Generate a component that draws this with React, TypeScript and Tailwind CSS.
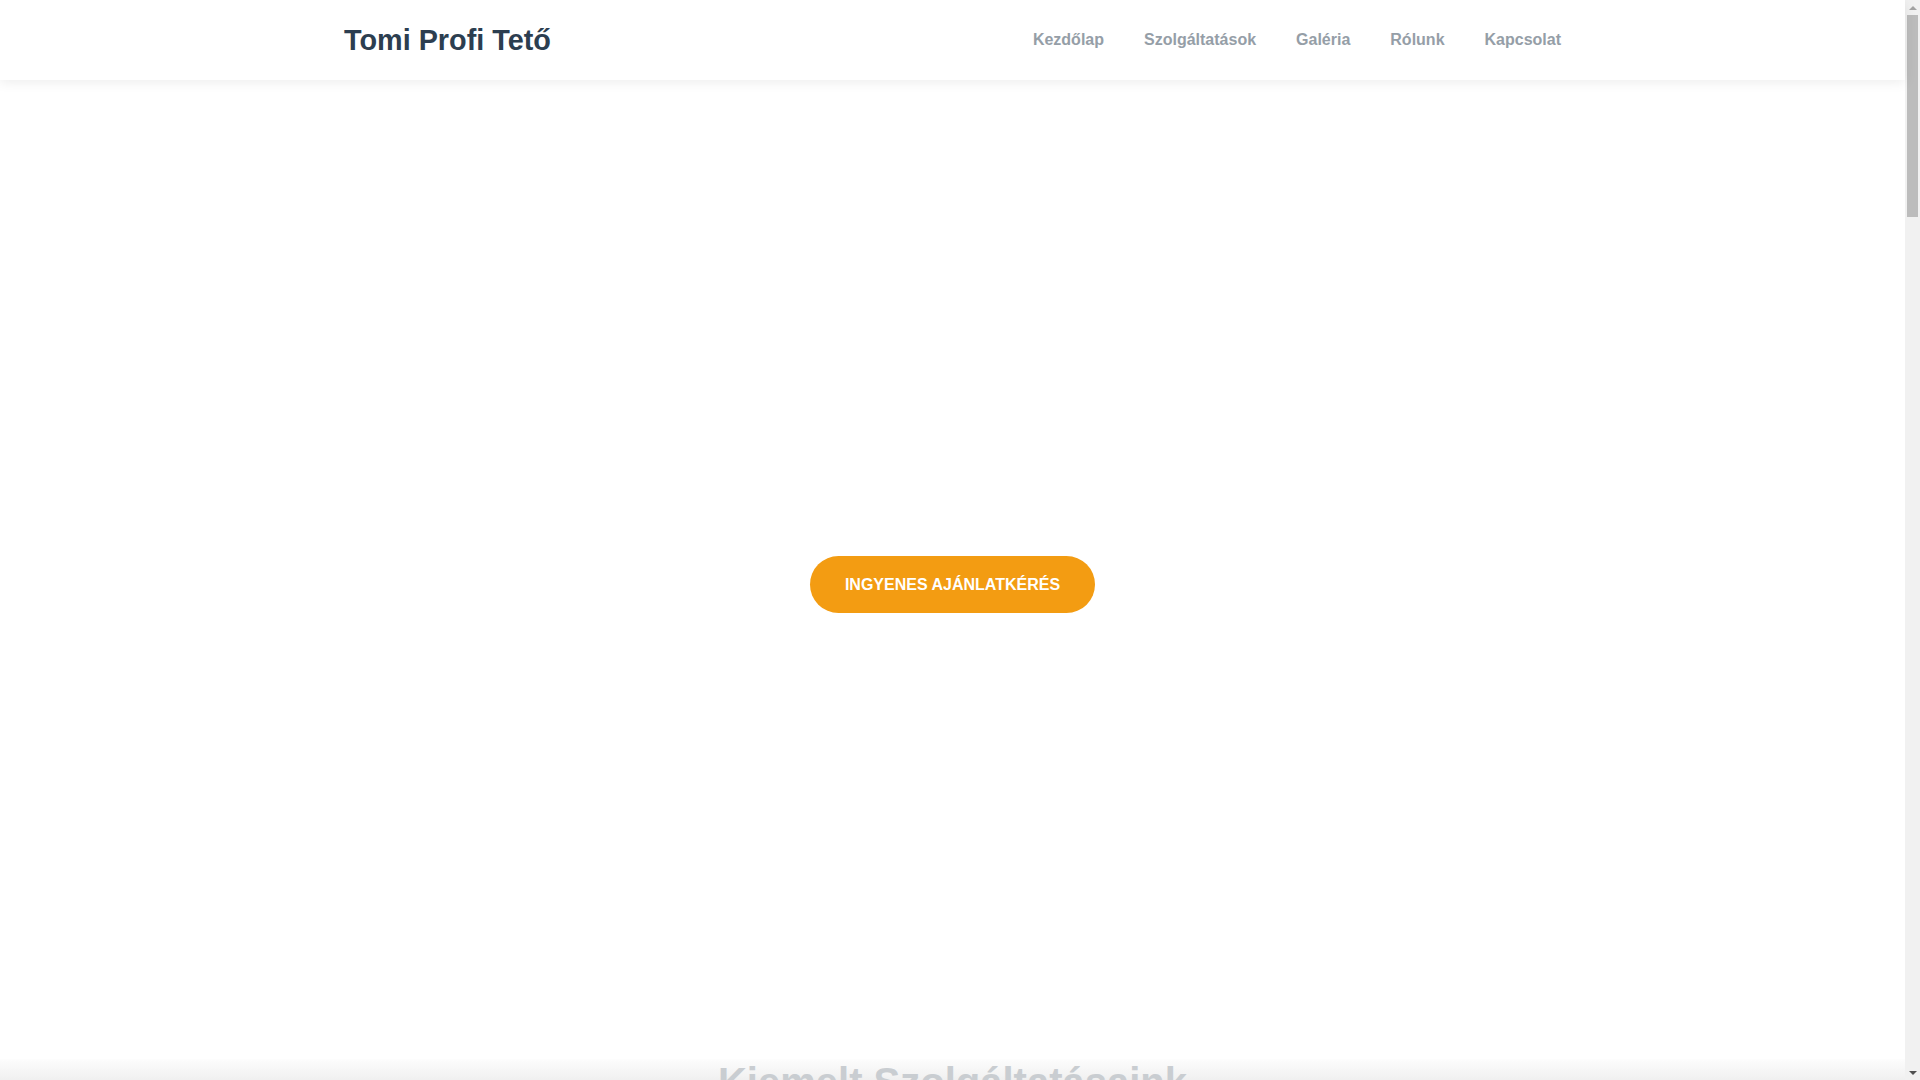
import React from "react";

const navItems = ["Kezdőlap", "Szolgáltatások", "Galéria", "Rólunk", "Kapcsolat"];

function Scrollbar() {
  return (
    <aside className="flex h-[1080px] w-[15px] shrink-0 flex-col bg-[#f1f1f1]">
      <div className="flex h-[15px] items-center justify-center">
        <div className="h-0 w-0 border-x-[4px] border-b-[4px] border-x-transparent border-b-[#a3a3a3]" />
      </div>
      <div className="mx-[2px] h-[202px] bg-[#bcbcbc]" />
      <div className="flex-1" />
      <div className="flex h-[15px] items-center justify-center">
        <div className="h-0 w-0 border-x-[4px] border-t-[4px] border-x-transparent border-t-[#505050]" />
      </div>
    </aside>
  );
}

export default function App() {
  return (
    <div className="flex h-[1080px] overflow-hidden bg-white font-['Liberation_Sans',Arial,sans-serif]">
      <main className="flex min-w-0 flex-1 flex-col">
        <header className="relative z-10 h-[80px] shrink-0 bg-white shadow-[0_2px_12px_rgba(0,0,0,0.08)]">
          <div className="mx-auto flex h-full w-[1217px] items-center justify-between">
            <a className="text-[28.8px] font-bold leading-none text-[#2c3e50]">Tomi Profi Tető</a>
            <nav className="flex items-center gap-10">
              {navItems.map((item) => (
                <a key={item} className="text-[16px] font-bold leading-none text-[#959ea7]">
                  {item}
                </a>
              ))}
            </nav>
          </div>
        </header>

        <section className="flex h-[979px] shrink-0 items-center justify-center pt-[30px]">
          <button className="rounded-full bg-[#f39c12] px-[35px] py-[19px] text-[16px] font-bold leading-[19px] text-white">
            INGYENES AJÁNLATKÉRÉS
          </button>
        </section>

        <section className="flex-1 bg-[linear-gradient(to_bottom,#fdfdfd_0px,#eeeeee_24px,#f3f3f3_200px)]">
          <h2 className="text-center text-[40px] font-bold leading-[46px] text-[#c9cdd1]">
            Kiemelt Szolgáltatásaink
          </h2>
        </section>
      </main>
      <Scrollbar />
    </div>
  );
}
